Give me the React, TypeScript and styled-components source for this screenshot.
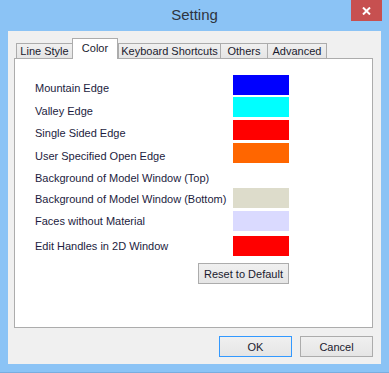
import React from 'react';
import styled, { createGlobalStyle, css } from 'styled-components';

const GlobalStyle = createGlobalStyle`
  html, body {
    margin: 0;
    padding: 0;
    background: #8bc3f5;
  }
  body {
    font-family: "Liberation Sans", Arial, sans-serif;
    font-size: 11px;
  }
`;

const Window = styled.div`
  width: 389px;
  height: 373px;
  box-sizing: border-box;
  display: flex;
  flex-direction: column;
  background: #8bc3f5;
  border-bottom: 1px solid #79addf;
`;

const TitleBar = styled.div`
  height: 31px;
  flex: none;
  display: grid;
  grid-template-columns: 1fr auto 1fr;
`;

const Title = styled.div`
  grid-column: 2;
  align-self: center;
  margin-top: -2px;
  font-size: 15px;
  color: #2e3440;
`;

const CloseButton = styled.button`
  grid-column: 3;
  justify-self: end;
  align-self: start;
  width: 31px;
  height: 21px;
  margin-right: 7px;
  padding: 0;
  border: none;
  background: #c75050;
  display: flex;
  align-items: center;
  justify-content: center;
`;

const Client = styled.div`
  flex: 1;
  margin: 0 8px 8px;
  padding: 7px 8px 7px 6px;
  background: #f0f0f0;
  display: flex;
  flex-direction: column;
`;

const TabStrip = styled.div`
  height: 20px;
  flex: none;
  display: flex;
  align-items: flex-end;
  padding-left: 2px;
`;

const Tab = styled.div<{ $width: number; $active?: boolean }>`
  width: ${(p) => p.$width}px;
  box-sizing: border-box;
  height: 15px;
  margin-left: -1px;
  border: 1px solid #acacac;
  border-bottom: none;
  background: linear-gradient(#f0f0f0, #e5e5e5);
  color: #1a1a2e;
  display: flex;
  align-items: center;
  justify-content: center;
  white-space: nowrap;
  &:first-child {
    margin-left: 0;
  }
  ${(p) =>
    p.$active &&
    css`
      height: 21px;
      margin-bottom: -1px;
      margin-right: 1px;
      padding-bottom: 3px;
      background: #ffffff;
      position: relative;
      z-index: 1;
    `}
`;

const Panel = styled.div`
  flex: 1;
  border: 1px solid #acacac;
  background: #ffffff;
  padding: 16px 0 0 20px;
  display: flex;
  flex-direction: column;
`;

const ColorGrid = styled.div`
  display: grid;
  grid-template-columns: 198px 56px;
`;

const Label = styled.div<{ $gap: number; $shift: number }>`
  grid-column: 1;
  height: 20px;
  margin-top: ${(p) => p.$gap}px;
  line-height: 20px;
  position: relative;
  top: ${(p) => p.$shift}px;
  color: #1c1c40;
  white-space: nowrap;
`;

const Swatch = styled.div<{ $color?: string; $gap: number }>`
  grid-column: 2;
  height: 20px;
  margin-top: ${(p) => p.$gap}px;
  background: ${(p) => p.$color ?? 'transparent'};
`;

const ResetRow = styled.div`
  display: flex;
  justify-content: flex-end;
  width: 254px;
  margin-top: 7px;
`;

const PushButton = styled.button<{ $width: number; $default?: boolean }>`
  width: ${(p) => p.$width}px;
  height: 21px;
  box-sizing: border-box;
  padding: 0;
  border: 1px solid ${(p) => (p.$default ? '#3399ff' : '#acacac')};
  background: linear-gradient(#f0f0f0, #e5e5e5);
  font-family: "Liberation Sans", Arial, sans-serif;
  font-size: 11px;
  color: #1a1a2e;
`;

const Footer = styled.div`
  flex: none;
  display: flex;
  justify-content: flex-end;
  gap: 8px;
  margin-top: 8px;
`;

const tabs = [
  { name: 'Line Style', width: 57 },
  { name: 'Color', width: 46, active: true },
  { name: 'Keyboard Shortcuts', width: 103 },
  { name: 'Others', width: 48 },
  { name: 'Advanced', width: 60 },
];

const colorRows = [
  { label: 'Mountain Edge', color: '#0000ff', gap: 0, shift: 3 },
  { label: 'Valley Edge', color: '#00ffff', gap: 2, shift: 4 },
  { label: 'Single Sided Edge', color: '#ff0000', gap: 3, shift: 3 },
  { label: 'User Specified Open Edge', color: '#ff6600', gap: 3, shift: 3 },
  { label: 'Background of Model Window (Top)', gap: 3, shift: 2 },
  { label: 'Background of Model Window (Bottom)', color: '#dddccb', gap: 2, shift: 1 },
  { label: 'Faces without Material', color: '#dadaff', gap: 3, shift: 0 },
  { label: 'Edit Handles in 2D Window', color: '#ff0000', gap: 5, shift: 0 },
];

const CloseIcon = () => (
  <svg width="9" height="8" viewBox="0 0 9 8">
    <path d="M1 0.5 L8 7.5 M8 0.5 L1 7.5" stroke="#ffffff" strokeWidth="2" />
  </svg>
);

const App: React.FC = () => {
  return (
    <>
      <GlobalStyle />
      <Window>
        <TitleBar>
          <Title>Setting</Title>
          <CloseButton>
            <CloseIcon />
          </CloseButton>
        </TitleBar>
        <Client>
          <TabStrip>
            {tabs.map((t) => (
              <Tab key={t.name} $width={t.width} $active={t.active}>
                {t.name}
              </Tab>
            ))}
          </TabStrip>
          <Panel>
            <ColorGrid>
              {colorRows.map((r) => (
                <React.Fragment key={r.label}>
                  <Label $gap={r.gap} $shift={r.shift}>{r.label}</Label>
                  <Swatch $gap={r.gap} $color={r.color} />
                </React.Fragment>
              ))}
            </ColorGrid>
            <ResetRow>
              <PushButton $width={91}>Reset to Default</PushButton>
            </ResetRow>
          </Panel>
          <Footer>
            <PushButton $width={73} $default>OK</PushButton>
            <PushButton $width={73}>Cancel</PushButton>
          </Footer>
        </Client>
      </Window>
    </>
  );
};

export default App;
